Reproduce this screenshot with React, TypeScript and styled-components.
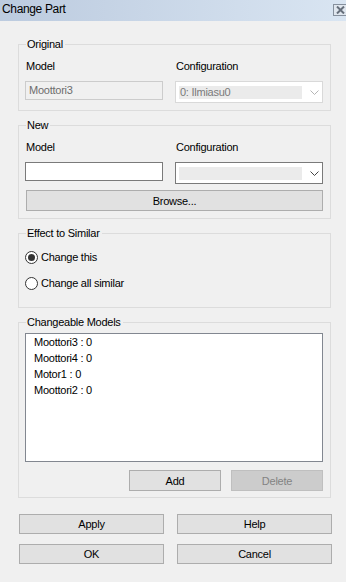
import React from "react";
import styled, { createGlobalStyle } from "styled-components";

const Global = createGlobalStyle`
  html, body {
    margin: 0;
    padding: 0;
    background: #f0f0f0;
  }
  body {
    font-family: "Liberation Sans", Arial, sans-serif;
    font-size: 11px;
    letter-spacing: -0.25px;
    color: #000;
  }
`;

const Window = styled.div`
  width: 346px;
  height: 582px;
  background: #f0f0f0;
  overflow: hidden;
`;

const TitleBar = styled.div`
  height: 21px;
  display: flex;
  align-items: center;
  justify-content: space-between;
  padding-left: 2px;
  background: linear-gradient(to right, #bccbdf, #d9e5f2);
  overflow: hidden;
  span {
    font-size: 12px;
    letter-spacing: -0.35px;
    margin-top: -3px;
  }
`;

const CloseBox = styled.div`
  width: 16px;
  height: 10px;
  margin-right: -7px;
  margin-top: -1px;
  border: 1px solid #86909d;
  background: #dfe6ee;
  display: flex;
  align-items: center;
  padding-left: 2px;
  box-sizing: content-box;
`;

const Content = styled.div`
  padding: 17px 0 0 18px;
  display: flex;
  flex-direction: column;
`;

const Group = styled.fieldset`
  width: 313px;
  box-sizing: border-box;
  margin: 0 0 8px 0;
  border: 1px solid #dcdcdc;
  padding: 9px 7px 7px 6px;
  min-width: 0;
  legend {
    padding: 0 2px 0 1px;
    margin-left: 1px;
    line-height: 13px;
  }
`;

const Grid = styled.div`
  display: grid;
  grid-template-columns: 138px 148px;
  column-gap: 12px;
  row-gap: 8px;
  align-items: start;
`;

const Label = styled.div`
  line-height: 13px;
  padding-left: 1px;
`;

const TextBox = styled.div<{ $disabled?: boolean }>`
  height: 19px;
  box-sizing: border-box;
  border: 1px solid ${(p) => (p.$disabled ? "#cccccc" : "#7a7a7a")};
  background: ${(p) => (p.$disabled ? "#f0f0f0" : "#fff")};
  color: #6d6d6d;
  padding: 2px 0 0 3px;
  line-height: 13px;
`;

const Combo = styled.div<{ $disabled?: boolean }>`
  height: 22px;
  box-sizing: border-box;
  border: 1px solid ${(p) => (p.$disabled ? "#d9d9d9" : "#7a7a7a")};
  background: #fff;
  display: flex;
  align-items: center;
  padding: 0 3px 0 3px;
  gap: 8px;
  color: #7a7a7a;
`;

const ComboValue = styled.div`
  flex: 1;
  height: 13px;
  background: #ebebeb;
  line-height: 13px;
  padding-left: 1px;
`;

const Button = styled.button<{ $disabled?: boolean }>`
  height: 21px;
  box-sizing: border-box;
  border: 1px solid ${(p) => (p.$disabled ? "#bfbfbf" : "#adadad")};
  background: ${(p) => (p.$disabled ? "#cccccc" : "#e1e1e1")};
  color: ${(p) => (p.$disabled ? "#838383" : "#000")};
  font: inherit;
  letter-spacing: inherit;
  padding: 0;
  margin: 0;
`;

const BrowseButton = styled(Button)`
  width: 297px;
  margin: 6px 0 0 1px;
`;

const RadioList = styled.div`
  display: flex;
  flex-direction: column;
  gap: 13px;
  padding: 2px 0 10px 0;
`;

const RadioRow = styled.label`
  display: flex;
  align-items: center;
  gap: 3px;
  line-height: 13px;
`;

const RadioCircle = styled.span<{ $checked?: boolean }>`
  width: 13px;
  height: 13px;
  box-sizing: border-box;
  border: 1px solid #333;
  border-radius: 50%;
  background: #fff;
  display: flex;
  align-items: center;
  justify-content: center;
  &::after {
    content: "";
    width: 7px;
    height: 7px;
    border-radius: 50%;
    background: ${(p) => (p.$checked ? "#333" : "transparent")};
  }
`;

const ListBox = styled.div`
  height: 129px;
  box-sizing: border-box;
  border: 1px solid #828790;
  background: #fff;
  padding: 0 0 0 8px;
  margin-top: -5px;
`;

const ListItem = styled.div`
  line-height: 16px;
`;

const ListButtons = styled.div`
  display: flex;
  justify-content: flex-end;
  gap: 10px;
  margin: 8px 0 -1px 0;
  ${Button} {
    width: 92px;
  }
`;

const Footer = styled.div`
  display: grid;
  grid-template-columns: 145px 155px;
  column-gap: 13px;
  row-gap: 10px;
  margin: 8px 0 0 1px;
  ${Button} {
    height: 20px;
  }
`;

const Chevron = ({ color }: { color: string }) => (
  <svg width="9" height="5" viewBox="0 0 9 5">
    <polyline points="0.5,0.5 4.5,4.5 8.5,0.5" fill="none" stroke={color} strokeWidth="1" />
  </svg>
);

const models = ["Moottori3 : 0", "Moottori4 : 0", "Motor1 : 0", "Moottori2 : 0"];

const App = () => {
  const [mode, setMode] = React.useState("this");

  return (
    <Window>
      <Global />
      <TitleBar>
        <span>Change Part</span>
        <CloseBox>
          <svg width="9" height="8" viewBox="0 0 9 8">
            <path d="M1 0.5 L8 7.5 M8 0.5 L1 7.5" stroke="#666f7b" strokeWidth="2" />
          </svg>
        </CloseBox>
      </TitleBar>
      <Content>
        <Group>
          <legend>Original</legend>
          <Grid>
            <Label>Model</Label>
            <Label>Configuration</Label>
            <TextBox $disabled>Moottori3</TextBox>
            <Combo $disabled>
              <ComboValue>0: Ilmiasu0</ComboValue>
              <Chevron color="#b5b5b5" />
            </Combo>
          </Grid>
        </Group>

        <Group>
          <legend>New</legend>
          <Grid>
            <Label>Model</Label>
            <Label>Configuration</Label>
            <TextBox />
            <Combo>
              <ComboValue />
              <Chevron color="#444" />
            </Combo>
          </Grid>
          <BrowseButton>Browse...</BrowseButton>
        </Group>

        <Group>
          <legend>Effect to Similar</legend>
          <RadioList>
            <RadioRow onClick={() => setMode("this")}>
              <RadioCircle $checked={mode === "this"} />
              Change this
            </RadioRow>
            <RadioRow onClick={() => setMode("all")}>
              <RadioCircle $checked={mode === "all"} />
              Change all similar
            </RadioRow>
          </RadioList>
        </Group>

        <Group>
          <legend>Changeable Models</legend>
          <ListBox>
            {models.map((m) => (
              <ListItem key={m}>{m}</ListItem>
            ))}
          </ListBox>
          <ListButtons>
            <Button>Add</Button>
            <Button $disabled>Delete</Button>
          </ListButtons>
        </Group>

        <Footer>
          <Button>Apply</Button>
          <Button>Help</Button>
          <Button>OK</Button>
          <Button>Cancel</Button>
        </Footer>
      </Content>
    </Window>
  );
};

export default App;
